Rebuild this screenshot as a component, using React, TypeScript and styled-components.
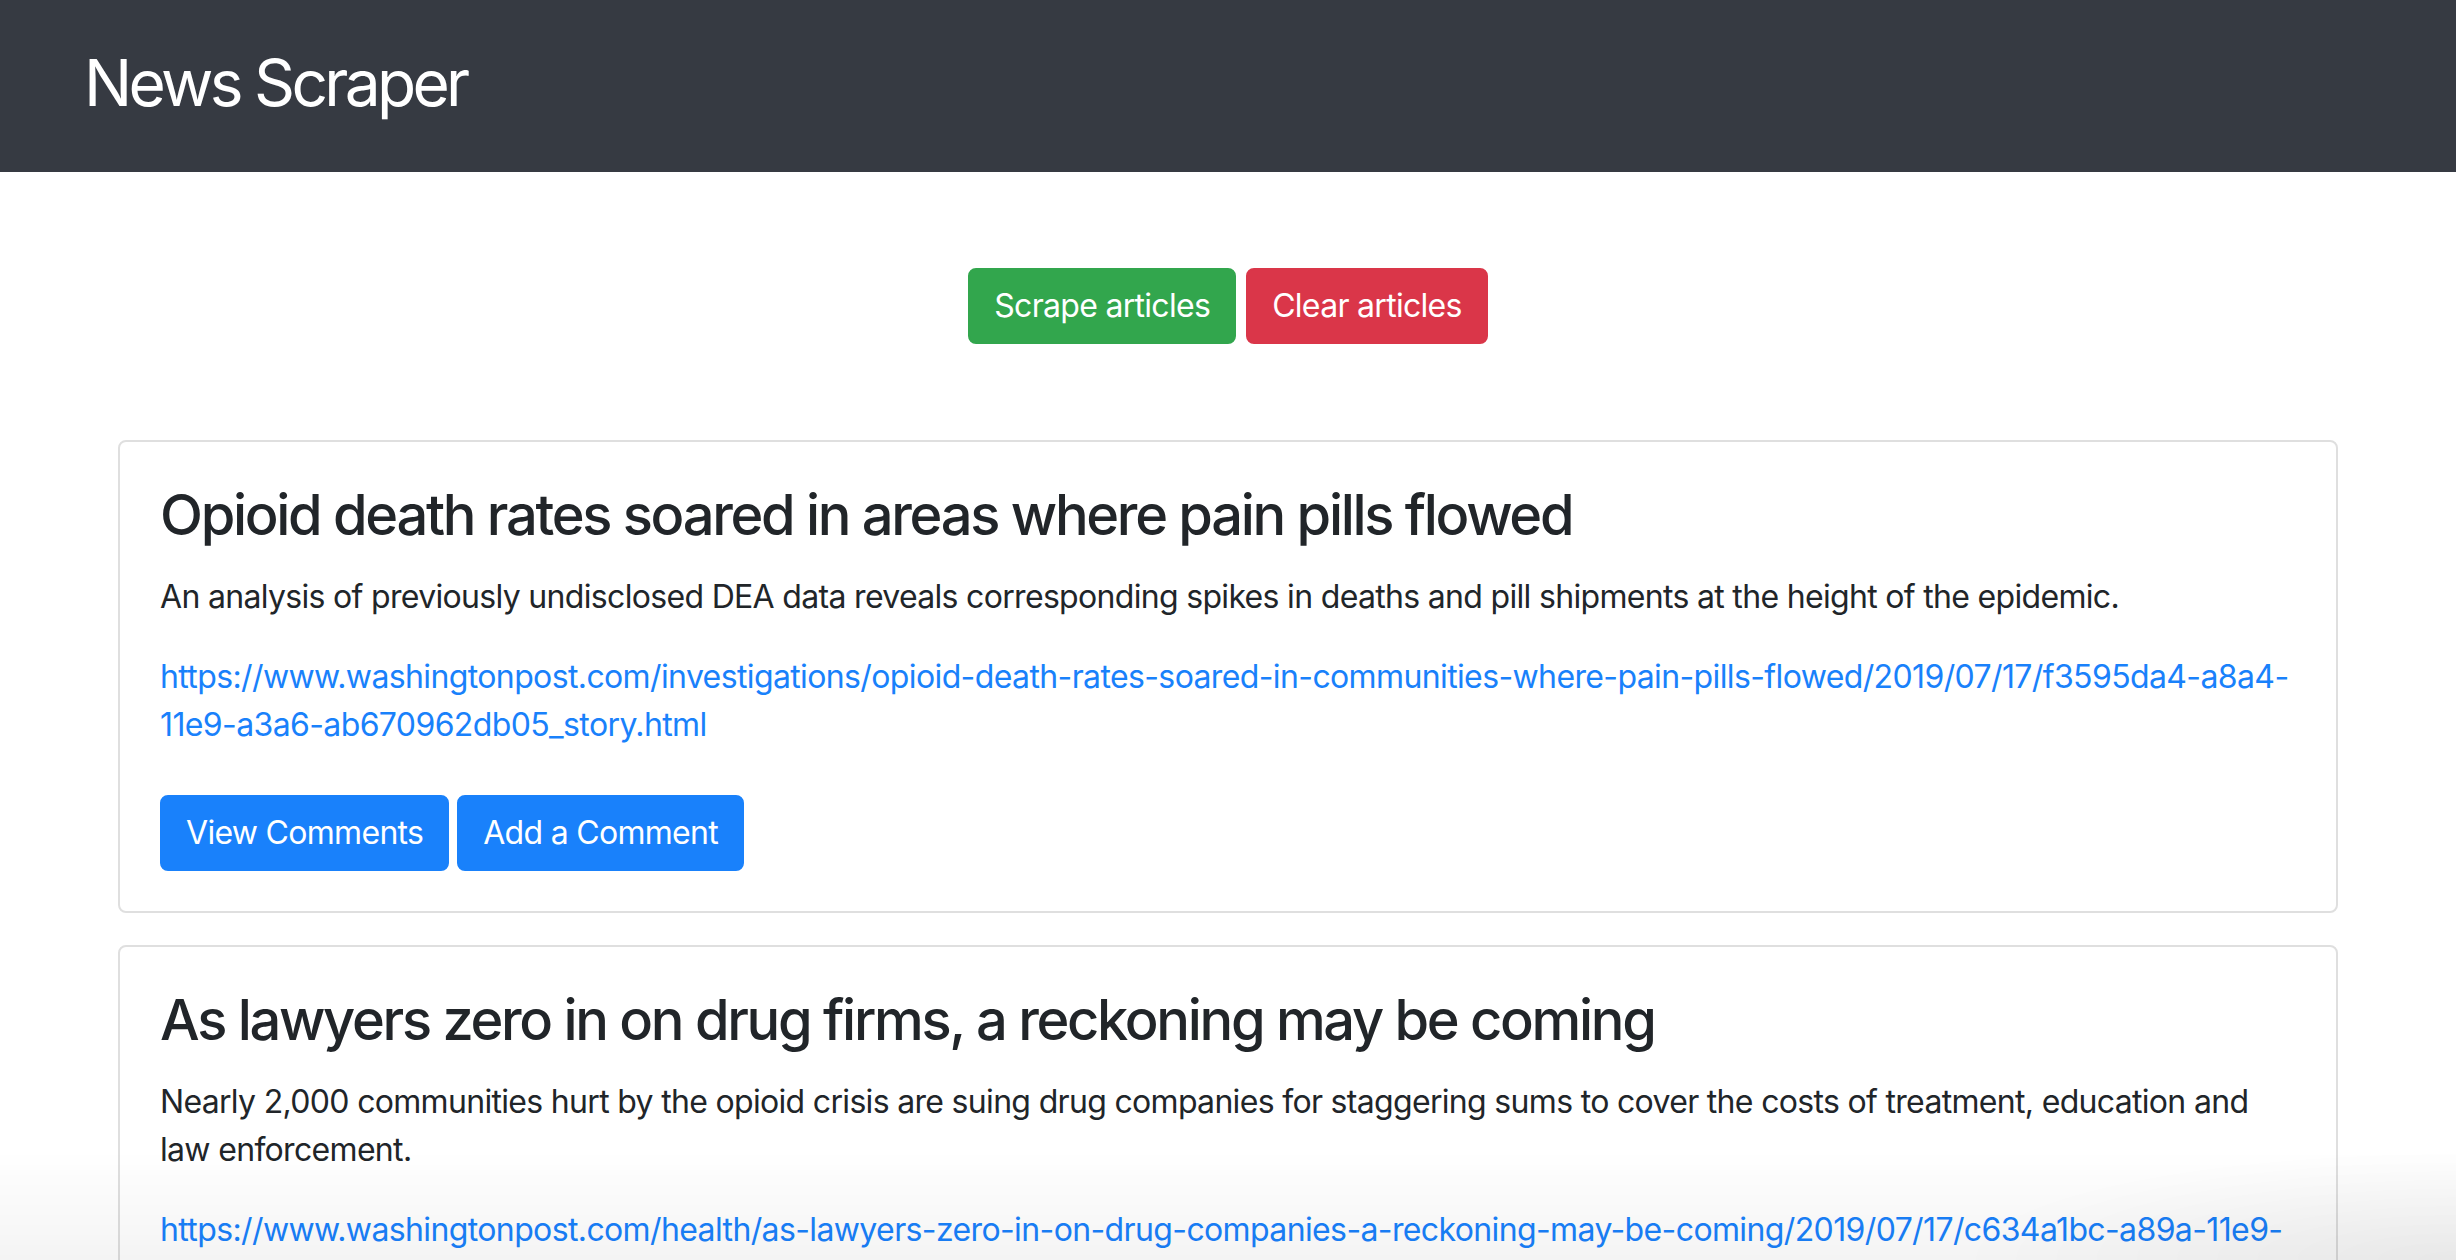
import React from "react";
import styled, { createGlobalStyle } from "styled-components";

const GlobalStyle = createGlobalStyle`
  html, body {
    margin: 0;
    padding: 0;
    overflow: hidden;
    background: #ffffff;
  }
  body {
    font-family: Inter, "Noto Sans", "Liberation Sans", sans-serif;
    font-size: 32px;
    line-height: 1.5;
    color: #212529;
  }
  * { box-sizing: border-box; }
`;

const NavBar = styled.nav`
  height: 172px;
  background: #363a42;
  display: flex;
  align-items: center;
  padding: 0 0 6px 84px;
`;

const Brand = styled.h2`
  margin: 0;
  font-size: 64px;
  font-weight: 400;
  line-height: 1.2;
  color: #ffffff;
  letter-spacing: -3.7px;
`;

const Container = styled.main`
  width: 2280px;
  margin: 0 auto;
  padding: 0 30px;
`;

const ActionRow = styled.div`
  display: flex;
  justify-content: center;
  gap: 10px;
  margin: 96px 0 96px;
`;

const Button = styled.button<{ $variant: "success" | "danger" | "primary" }>`
  font-family: inherit;
  font-size: 32px;
  line-height: 48px;
  font-weight: 400;
  padding: 12px 24px;
  border-radius: 8px;
  border: 2px solid transparent;
  color: #ffffff;
  letter-spacing: -0.7px;
  cursor: pointer;
  background: ${(p) =>
    p.$variant === "success" ? "#32a64d" : p.$variant === "danger" ? "#da3649" : "#1981fb"};
  border-color: ${(p) =>
    p.$variant === "success" ? "#32a64d" : p.$variant === "danger" ? "#da3649" : "#1981fb"};
`;

const Card = styled.article`
  border: 2px solid #dfdfdf;
  border-radius: 8px;
  padding: 40px;
  margin-bottom: 32px;
  background: #ffffff;
`;

const CardTitle = styled.h3`
  margin: 0 0 24px;
  font-size: 56px;
  font-weight: 500;
  line-height: 1.2;
  letter-spacing: -2.3px;
  color: #212529;
`;

const CardText = styled.p`
  margin: 0 0 32px;
  letter-spacing: -0.68px;
`;

const CardLink = styled.a`
  display: block;
  margin: 0 0 46px;
  color: #1981fb;
  text-decoration: none;
  letter-spacing: -0.62px;
`;

const ButtonRow = styled.div`
  display: flex;
  gap: 8px;
`;

const BottomFade = styled.div`
  position: fixed;
  left: 0;
  right: 0;
  bottom: 0;
  height: 110px;
  pointer-events: none;
  background:
    radial-gradient(ellipse 500px 110px at 100% 100%, rgba(0, 0, 0, 0.05), rgba(0, 0, 0, 0)),
    linear-gradient(to bottom, rgba(0, 0, 0, 0), rgba(0, 0, 0, 0.045));
`;

type Article = { title: string; summary: string; url: string };

const articles: Article[] = [
  {
    title: "Opioid death rates soared in areas where pain pills flowed",
    summary:
      "An analysis of previously undisclosed DEA data reveals corresponding spikes in deaths and pill shipments at the height of the epidemic.",
    url: "https://www.washingtonpost.com/investigations/opioid-death-rates-soared-in-communities-where-pain-pills-flowed/2019/07/17/f3595da4-a8a4-11e9-a3a6-ab670962db05_story.html",
  },
  {
    title: "As lawyers zero in on drug firms, a reckoning may be coming",
    summary:
      "Nearly 2,000 communities hurt by the opioid crisis are suing drug companies for staggering sums to cover the costs of treatment, education and law enforcement.",
    url: "https://www.washingtonpost.com/health/as-lawyers-zero-in-on-drug-companies-a-reckoning-may-be-coming/2019/07/17/c634a1bc-a89a-11e9-86dd-d7f0e60391e9_story.html",
  },
];

export default function App() {
  return (
    <>
      <GlobalStyle />
      <NavBar>
        <Brand>News Scraper</Brand>
      </NavBar>
      <Container>
        <ActionRow>
          <Button $variant="success">Scrape articles</Button>
          <Button $variant="danger">Clear articles</Button>
        </ActionRow>
        {articles.map((a) => (
          <Card key={a.url}>
            <CardTitle>{a.title}</CardTitle>
            <CardText>{a.summary}</CardText>
            <CardLink href={a.url}>{a.url}</CardLink>
            <ButtonRow>
              <Button $variant="primary">View Comments</Button>
              <Button $variant="primary">Add a Comment</Button>
            </ButtonRow>
          </Card>
        ))}
      </Container>
      <BottomFade />
    </>
  );
}
